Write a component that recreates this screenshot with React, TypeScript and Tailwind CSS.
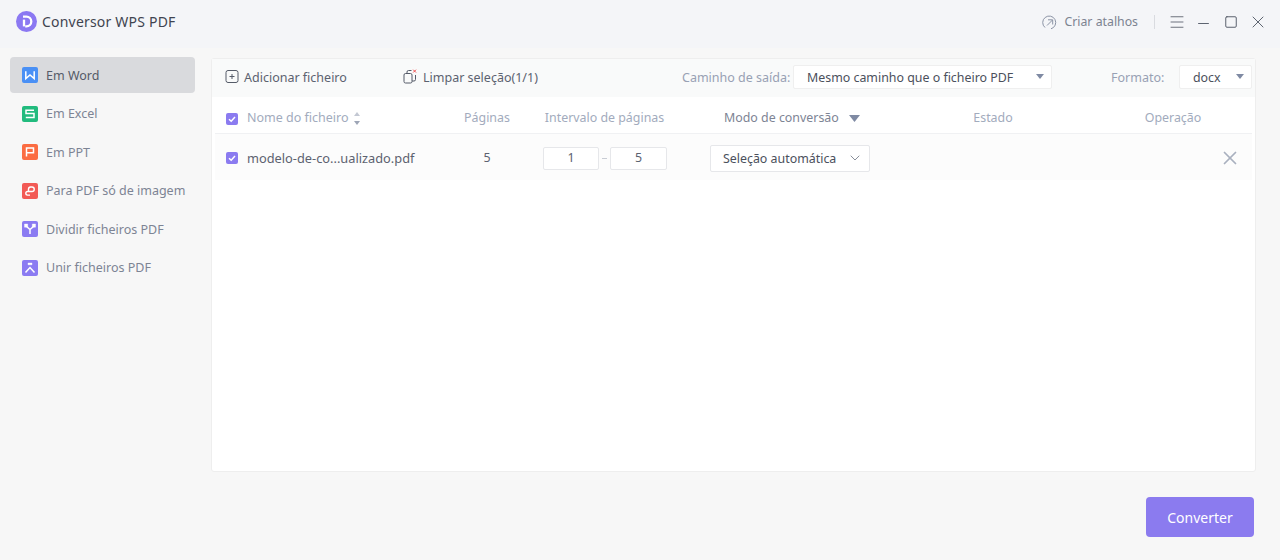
import { ChevronDown, X, Minus, Menu, Square } from "lucide-react";

const font = "font-['Noto_Sans','Liberation_Sans',sans-serif]";

function WordGlyph() {
  return <path d="M3.8 4.2V11.6L8 8l4.2 3.6V4.2" fill="none" stroke="#fff" strokeWidth="1.5" />;
}
function ExcelGlyph() {
  return <path d="M12 4.2H4v3.4h8v3.8H3.8" fill="none" stroke="#fff" strokeWidth="1.5" />;
}
function PptGlyph() {
  return <path d="M4.5 12.5V4h7v4.8h-7" fill="none" stroke="#fff" strokeWidth="1.5" />;
}
function ImageGlyph() {
  return (
    <path
      d="M7 8.5h3a2.2 2.2 0 0 0 0-4.5H8.6A2.2 2.2 0 0 0 6.5 6.2V8.5H5.6a1.8 1.8 0 0 0 0 3.6H8"
      fill="none"
      stroke="#fff"
      strokeWidth="1.4"
    />
  );
}
function SplitGlyph() {
  return (
    <g fill="none" stroke="#fff" strokeWidth="1.5">
      <path d="M8 13V8.5M4 5l4 3.5L12 5" />
      <path d="M2.5 3h3.2v3.2H2.5zM10.3 3h3.2v3.2h-3.2z" fill="#fff" strokeWidth="0.4" />
    </g>
  );
}
function MergeGlyph() {
  return (
    <g fill="none" stroke="#fff" strokeWidth="1.5">
      <path d="M3.5 12.5 8 7.5l4.5 5" />
      <path d="M6 3h4v1.8H6z" fill="#fff" strokeWidth="0.4" />
    </g>
  );
}

const items = [
  { label: "Em Word", color: "#4a90f5", glyph: <WordGlyph /> },
  { label: "Em Excel", color: "#22bb7e", glyph: <ExcelGlyph /> },
  { label: "Em PPT", color: "#fb6c42", glyph: <PptGlyph /> },
  { label: "Para PDF só de imagem", color: "#f25a55", glyph: <ImageGlyph /> },
  { label: "Dividir ficheiros PDF", color: "#8b7bf2", glyph: <SplitGlyph /> },
  { label: "Unir ficheiros PDF", color: "#8b7bf2", glyph: <MergeGlyph /> },
];

function Checkbox() {
  return (
    <span className="flex h-[12px] w-[12px] items-center justify-center rounded-[2px] bg-[#8b7bf0]">
      <svg width="10" height="10" viewBox="0 0 10 10">
        <path d="M2 5.2 4.2 7.2 8 3" fill="none" stroke="#fff" strokeWidth="1.5" />
      </svg>
    </span>
  );
}

function Caret() {
  return (
    <svg width="8" height="5" viewBox="0 0 8 5">
      <path d="M0 0h8L4 5z" fill="#7f8aa3" />
    </svg>
  );
}

export default function App() {
  return (
    <div className={`${font} flex h-[560px] w-[1280px] flex-col overflow-hidden bg-[#f7f7f7] text-[12.4px]`}>
      {/* title bar */}
      <div className="flex h-[48px] items-center bg-[#f4f5f8] pb-[5px] pl-[16px] pr-[9px]">
        <svg width="21" height="21" viewBox="0 0 21 21">
          <circle cx="10.5" cy="10.5" r="10.5" fill="#8b78f2" />
          <path d="M7 5.6h3.4a4.9 4.9 0 0 1 0 9.8H9.2" fill="none" stroke="#fff" strokeWidth="2.3" />
          <path d="M8 8.6v6.8" stroke="#fff" strokeWidth="2.3" />
        </svg>
        <span className="ml-[5px] text-[14px] tracking-[0.2px] text-[#3f4450]">Conversor WPS PDF</span>
        <div className="ml-auto mt-[1px] flex items-center">
          <svg width="15" height="15" viewBox="0 0 15 15" fill="none" stroke="#8b93a5" strokeWidth="1">
            <path d="M3 12.5A6.5 6.5 0 1 1 9 13.8" />
            <path d="M5 10.5 10.5 5M6 4.8h4.7v4.7" />
          </svg>
          <span className="ml-[7px] mt-[1px] text-[12.3px] text-[#7c8391]">Criar atalhos</span>
          <span className="ml-[16px] mr-[8px] h-[14px] w-px bg-[#d9dbe0]" />
          <span className="flex w-[27px] justify-center"><Menu size={18} strokeWidth={1.1} className="text-[#505664]" /></span>
          <span className="flex w-[27px] justify-center"><Minus size={17} strokeWidth={1.3} className="mt-[3px] text-[#505664]" /></span>
          <span className="flex w-[27px] justify-center"><Square size={14} strokeWidth={1.6} className="text-[#505664]" /></span>
          <span className="flex w-[27px] justify-center"><X size={20} strokeWidth={1.1} className="text-[#505664]" /></span>
        </div>
      </div>

      <div className="flex flex-1">
        {/* sidebar */}
        <div className="ml-[10px] mt-[9px] flex w-[185px] flex-col gap-[2.5px]">
          {items.map((it, i) => (
            <div
              key={it.label}
              className={`flex h-[36px] items-center rounded-[4px] pl-[12px] ${i === 0 ? "bg-[#d9dadd] text-[#555b68]" : "text-[#7d8494]"}`}
            >
              <svg width="16" height="16" viewBox="0 0 16 16">
                <rect width="16" height="16" rx="2" fill={it.color} />
                {it.glyph}
              </svg>
              <span className="ml-[8px] mt-[2px] text-[12.5px]">{it.label}</span>
            </div>
          ))}
        </div>

        {/* main */}
        <div className="ml-[16px] flex w-[1045px] flex-col">
          <div className="mt-[10px] h-[414px] rounded-[3px] border border-[#eeeeee] bg-white">
            {/* toolbar */}
            <div className="flex h-[38px] items-center whitespace-nowrap bg-[#f9fafa] pb-[3px] pl-[13px]">
              <svg width="14" height="15" viewBox="0 0 14 15" fill="none" stroke="#555b68" strokeWidth="1">
                <path d="M3 1.5h8a2 2 0 0 1 2 2v8a2 2 0 0 1-2 2H3a2 2 0 0 1-2-2v-8a2 2 0 0 1 2-2zM7 5v5M4.5 7.5h5" />
              </svg>
              <span className="ml-[5px] mt-[4px] w-[159px] text-[12.5px] text-[#5c6270]">Adicionar ficheiro</span>
              <svg width="14" height="15" viewBox="0 0 14 15" fill="none" stroke="#555b68" strokeWidth="1">
                <path d="M2.5 4.5H7.5A1.5 1.5 0 0 1 9 6v6.5A1.5 1.5 0 0 1 7.5 14h-5A1.5 1.5 0 0 1 1 12.5V6a1.5 1.5 0 0 1 1.5-1.5z" />
                <path d="M4 4.5V3a1.5 1.5 0 0 1 1.5-1.5H8.5M12.5 6v4.5A1.5 1.5 0 0 1 11 12H9" />
                <path d="M10.2 0.7l2.8 2.8M13 0.7l-2.8 2.8" stroke="#ee4b4b" />
              </svg>
              <span className="ml-[6px] mt-[4px] w-[259px] text-[12.5px] text-[#5c6270]">Limpar seleção(1/1)</span>
              <span className="mt-[4px] w-[108px] text-[12.5px] text-[#98a1b4]">Caminho de saída:</span>
              <div className="ml-[3px] flex h-[24px] w-[259px] items-center rounded-[2px] border border-[#efefef] bg-white pl-[13px] pr-[7px] text-[#4b505c]">
                <span className="mt-[4px]">Mesmo caminho que o ficheiro PDF</span>
                <span className="ml-auto flex"><Caret /></span>
              </div>
              <span className="ml-[59px] mt-[4px] w-[53px] text-[12.5px] text-[#98a1b4]">Formato:</span>
              <div className="ml-[15px] flex h-[24px] w-[73px] items-center rounded-[2px] border border-[#efefef] bg-white pl-[13px] pr-[7px] text-[#4b505c]">
                <span className="mt-[4px]">docx</span>
                <span className="ml-auto flex"><Caret /></span>
              </div>
            </div>

            {/* table */}
            <div className="mx-[3px]">
              <div className="grid h-[37px] grid-cols-[221px_80px_155px_208px_206px_154px] items-center border-b border-[#f0f1f3] pl-[11px] pt-[7px] text-[#a2abbd]">
                <div className="flex items-center">
                  <Checkbox />
                  <span className="ml-[9px] text-[12.5px]">Nome do ficheiro</span>
                  <svg width="8" height="15" viewBox="0 0 8 15" className="ml-[4px]">
                    <path d="M4 1l3 4H1z" fill="#c3c8d3" />
                    <path d="M4 14l3-4H1z" fill="#9da5b6" />
                  </svg>
                </div>
                <div className="text-center">Páginas</div>
                <div className="text-center">Intervalo de páginas</div>
                <div className="flex items-center pl-[42px] text-[#7d8494]">
                  <span>Modo de conversão</span>
                  <svg width="11" height="7" viewBox="0 0 11 7" className="ml-[10px]">
                    <path d="M0 0h11L5.5 7z" fill="#7f8aa3" />
                  </svg>
                </div>
                <div className="text-center">Estado</div>
                <div className="text-center">Operação</div>
              </div>

              <div className="grid h-[46px] grid-cols-[221px_80px_155px_208px_206px_154px] items-center bg-[#fcfcfc] pl-[11px] pt-[2px] text-[#5c6270]">
                <div className="flex items-center">
                  <Checkbox />
                  <span className="ml-[9px] mt-[2px] text-[12.8px]">modelo-de-co...ualizado.pdf</span>
                </div>
                <div className="mt-[1px] text-center">5</div>
                <div className="flex items-center pl-[16px]">
                  <div className="flex h-[23px] w-[56px] items-center justify-center rounded-[2px] border border-[#e6e7ea] bg-white">1</div>
                  <span className="mx-[3px] h-px w-[5px] bg-[#c8ccd4]" />
                  <div className="flex h-[23px] w-[57px] items-center justify-center rounded-[2px] border border-[#e6e7ea] bg-white">5</div>
                </div>
                <div className="pl-[28px]">
                  <div className="flex h-[27px] w-[160px] items-center rounded-[2px] border border-[#e6e7ea] bg-white pl-[12px] pr-[6px] text-[#4b505c]">
                    <span className="mt-[2px]">Seleção automática</span>
                    <ChevronDown size={16} strokeWidth={1.2} className="ml-auto text-[#6b7280]" />
                  </div>
                </div>
                <div />
                <div className="flex justify-end pr-[9px]">
                  <X size={22} strokeWidth={1.9} className="text-[#a9b0bf]" />
                </div>
              </div>
            </div>
          </div>

          <div className="mt-[25px] flex justify-end pr-[2px]">
            <button className="h-[40px] w-[108px] rounded-[4px] bg-[#8b7bef] text-[14px] text-white">Converter</button>
          </div>
        </div>
      </div>
    </div>
  );
}
